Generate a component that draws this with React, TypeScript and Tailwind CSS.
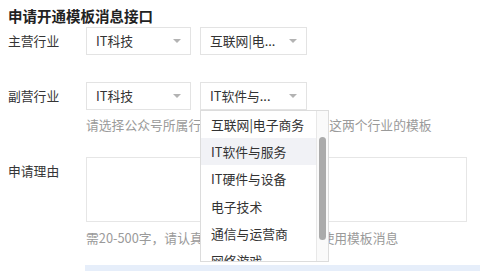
import React from "react";

const font = {
  fontFamily: '"Noto Sans CJK SC", "Noto Sans", sans-serif',
};

function Arrow() {
  return (
    <svg width="8" height="4" viewBox="0 0 8 4" className="shrink-0">
      <polygon points="0,0 8,0 4,4" fill="#b3b3b3" />
    </svg>
  );
}

function Select({ value, width }: { value: string; width: string }) {
  return (
    <div
      className={`${width} h-[28px] border border-[#e3e3e3] bg-white flex items-center justify-between pl-[9px] pr-[9px] text-[12.8px] text-[#333]`}
    >
      <span className="whitespace-nowrap">{value}</span>
      <Arrow />
    </div>
  );
}

const options = ["互联网|电子商务", "IT软件与服务", "IT硬件与设备", "电子技术", "通信与运营商", "网络游戏"];

export default function App() {
  return (
    <div className="w-[480px] h-[271px] overflow-hidden bg-white pl-2" style={font}>
      <div className="h-[27px] pt-[6px] text-[14.5px] leading-[20px] font-bold text-[#222]">
        申请开通模板消息接口
      </div>

      {/* 主营行业 */}
      <div className="flex items-center h-[28px]">
        <div className="w-[78px] text-[12.8px] text-[#353535]">主营行业</div>
        <div className="flex gap-[9px]">
          <Select value="IT科技" width="w-[105px]" />
          <Select value="互联网|电..." width="w-[107px]" />
        </div>
      </div>

      {/* 副营行业 */}
      <div className="flex items-center h-[28px] mt-[27px]">
        <div className="w-[78px] text-[12.8px] text-[#353535]">副营行业</div>
        <div className="flex gap-[9px]">
          <Select value="IT科技" width="w-[105px]" />
          <div className="relative">
            <Select value="IT软件与..." width="w-[107px]" />
            {/* open dropdown */}
            <div className="absolute left-0 top-[28px] z-10 w-[129px] h-[152px] border border-[#dcdcdc] bg-white flex overflow-hidden">
              <div className="flex-1 flex flex-col">
                {options.map((o, i) => (
                  <div
                    key={o}
                    className={`h-[27.2px] shrink-0 flex items-center pl-[10px] text-[12.8px] text-[#333] whitespace-nowrap ${
                      i === 1 ? "bg-[#f1f2f6]" : ""
                    }`}
                  >
                    {o}
                  </div>
                ))}
              </div>
              <div className="w-[12px] border-l border-[#e8e8e8] bg-[#fafafa] pt-[26px] flex justify-center">
                <div className="w-[7px] h-[103px] rounded-full bg-[#ababab]" />
              </div>
            </div>
          </div>
        </div>
      </div>
      <div className="ml-[78px] mt-[6px] text-[12.8px] leading-[18px] text-[#9a9a9a] whitespace-nowrap">
        请选择公众号所属行业，申请成功后可使用这两个行业的模板
      </div>

      {/* 申请理由 */}
      <div className="flex mt-[23px]">
        <div className="w-[78px] mt-[5px] text-[12.8px] leading-[18px] text-[#353535]">申请理由</div>
        <div className="w-[381px] h-[65px] border border-[#e6e6e6] bg-white" />
      </div>
      <div className="ml-[78px] mt-[7px] text-[12.8px] leading-[18px] text-[#9a9a9a] whitespace-nowrap">
        需20-500字，请认真填写,审核通过后才能使用模板消息
      </div>
      <div className="ml-[77px] mt-[18px] h-[20px] bg-[#e6eefa]" />
    </div>
  );
}
